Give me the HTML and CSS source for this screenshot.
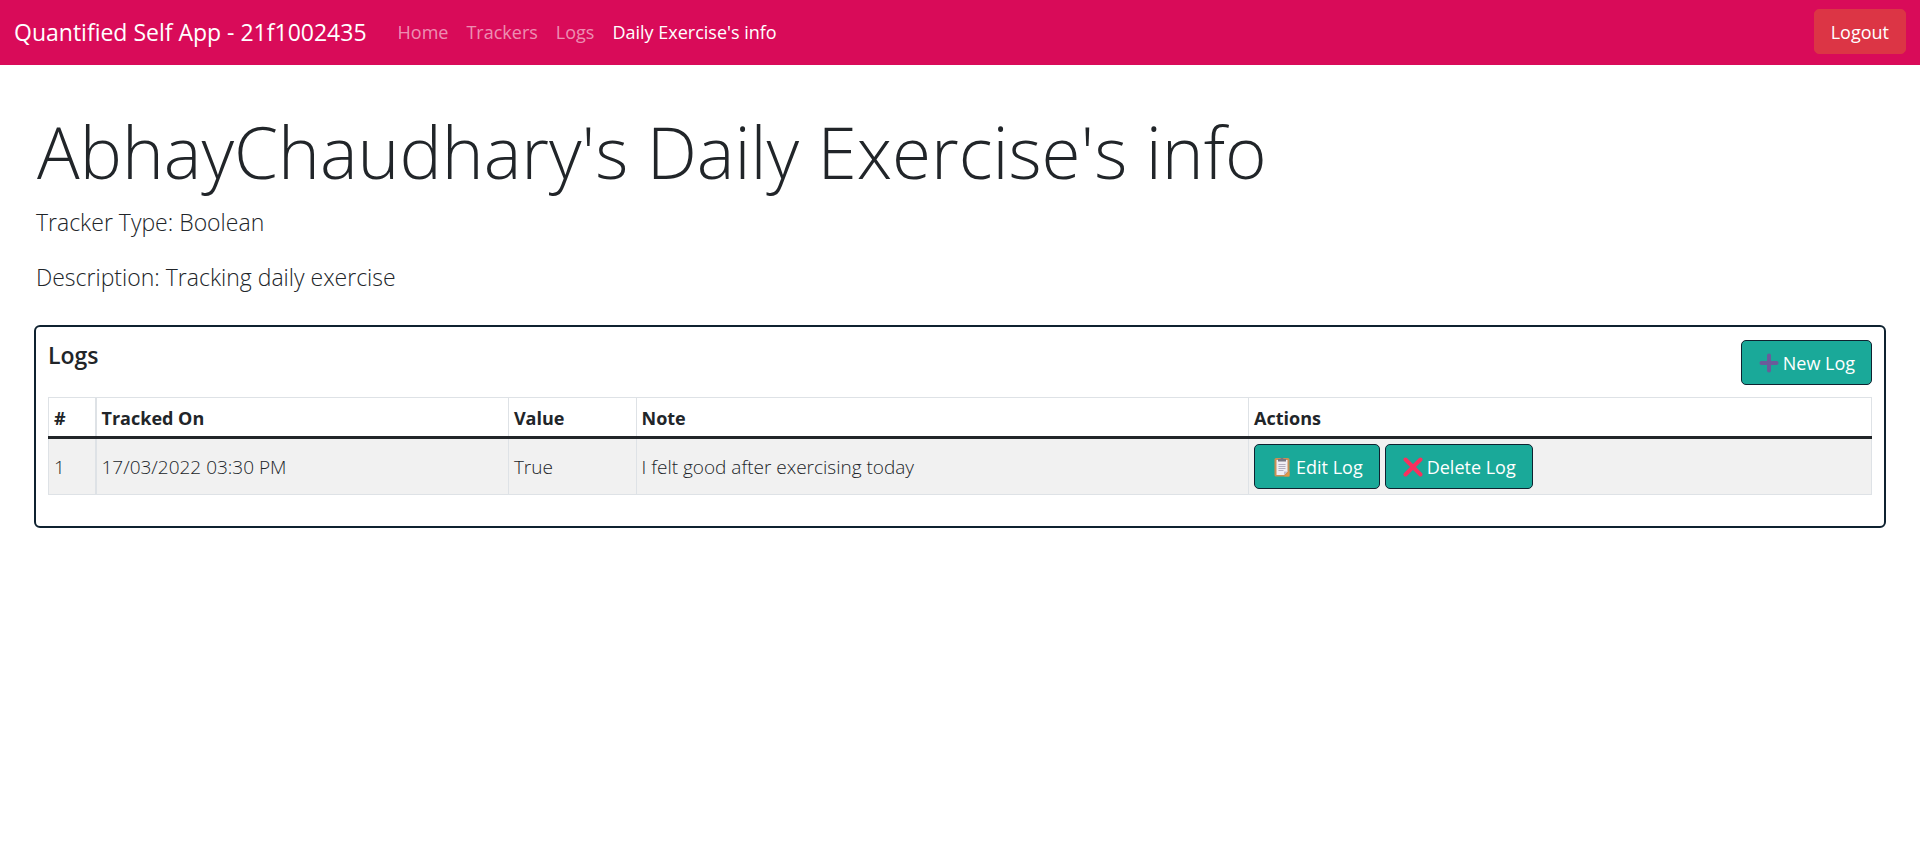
FILE: index.html
```html
<!DOCTYPE html>
<html lang="en">
<head>
<meta charset="utf-8">
<meta name="viewport" content="width=device-width, initial-scale=1">
<title>Daily Exercise's info</title>
<link rel="stylesheet" href="styles.css">
</head>
<body>
<nav class="navbar">
  <a class="brand" href="#">Quantified Self App - 21f1002435</a>
  <ul class="nav-list">
    <li><a class="nav-link" href="#">Home</a></li>
    <li><a class="nav-link" href="#">Trackers</a></li>
    <li><a class="nav-link" href="#">Logs</a></li>
    <li><a class="nav-link active" href="#" aria-current="page">Daily Exercise's info</a></li>
  </ul>
  <button class="btn btn-danger" type="button">Logout</button>
</nav>
<main class="page">
  <h1 class="title">AbhayChaudhary's Daily Exercise's info</h1>
  <p class="lead">Tracker Type: Boolean</p>
  <p class="lead">Description: Tracking daily exercise</p>
  <section class="card">
    <div class="card-head">
      <h2 class="card-title">Logs</h2>
      <button class="btn btn-teal" type="button">
        <svg class="icon" viewBox="0 0 20 20" aria-hidden="true"><path d="M10 2.500v15M2.500 10h15" fill="none" stroke="#6b5b9a" stroke-width="4" stroke-linecap="round"/></svg>New Log
      </button>
    </div>
    <table class="logs">
      <colgroup><col class="col-num"><col class="col-date"><col class="col-value"><col class="col-note"><col></colgroup>
      <thead>
        <tr><th scope="col">#</th><th scope="col">Tracked On</th><th scope="col">Value</th><th scope="col">Note</th><th scope="col">Actions</th></tr>
      </thead>
      <tbody>
        <tr>
          <td>1</td><td>17/03/2022 03:30 PM</td><td>True</td><td>I felt good after exercising today</td>
          <td>
            <div class="actions">
              <button class="btn btn-teal" type="button">
                <svg class="icon" viewBox="0 0 20 20" aria-hidden="true"><rect x="2.500" y="1" width="15" height="18.500" rx="1.500" fill="#c99056"/><path d="M4.500 3h11v11.500l-3.500 3.500H4.500z" fill="#f0eef5"/><path d="M12 18v-3.500h3.500z" fill="#c4bdcf"/><path d="M17.500 14v5.500H12z" fill="#e19747"/><path d="M6.500 7.500h7M6.500 9.500h7M6.500 11.500h7M6.500 13.500h5" stroke="#b3aebf" stroke-width="1"/><path d="M6 4.500V2h2.500a1.500 1.500 0 0 1 3 0H14v2.500z" fill="#777583"/></svg>Edit Log
              </button>
              <button class="btn btn-teal" type="button">
                <svg class="icon" viewBox="0 0 20 20" aria-hidden="true"><path d="M2.500 2.500l15 15M17.500 2.500l-15 15" fill="none" stroke="#f8315e" stroke-width="4" stroke-linecap="round"/></svg>Delete Log
              </button>
            </div>
          </td>
        </tr>
      </tbody>
    </table>
  </section>
</main>
</body>
</html>
```
FILE: styles.css
```css
* { box-sizing: border-box; }

body {
  margin: 0;
  background: #fff;
  color: #212529;
  font-family: "Open Sans", "Noto Sans", sans-serif;
  font-size: 18px;
  line-height: 28px;
}

.navbar {
  display: flex;
  align-items: center;
  padding: 9px 14px 11px;
  background: #d90b59;
}

.brand {
  margin-right: 22px;
  color: #fff;
  font-size: 23px;
  text-decoration: none;
}

.nav-list {
  display: flex;
  flex: 1;
  margin: 0;
  padding: 0;
  list-style: none;
}

.nav-link {
  display: block;
  padding: 0 9px;
  color: rgba(255, 255, 255, 0.55);
  text-decoration: none;
}

.nav-link.active { color: #fff; }

.btn {
  display: inline-flex;
  align-items: center;
  height: 45px;
  padding: 0 16px;
  border: 1px solid;
  border-radius: 5px;
  color: #fff;
  font: inherit;
  font-size: 18px;
  font-weight: 400;
  cursor: pointer;
}

.btn-danger {
  background: #dc3545;
  border-color: #dc3545;
}

.btn-teal {
  background: #1aa999;
  border-color: #0f2230;
}

.icon {
  width: 20px;
  height: 20px;
  margin: 0 4px 0 1px;
}

.page { padding: 41px 34px; }

.title {
  margin: 0 0 6px 3px;
  font-size: 71px;
  font-weight: 300;
  line-height: 92px;
}

.lead {
  margin: 0 2px 19px;
  font-size: 23px;
  font-weight: 300;
  line-height: 36px;
}

.card {
  margin-top: 30px;
  padding: 13px 12px 31px;
  border: 2px solid #0f2230;
  border-radius: 6px;
}

.card-head {
  display: flex;
  justify-content: space-between;
  align-items: flex-start;
  margin-bottom: 12px;
}

.card-title {
  margin: 0;
  font-size: 23px;
  font-weight: 600;
  line-height: 30px;
}

.logs {
  width: 100%;
  border-collapse: collapse;
  table-layout: fixed;
}

.col-num { width: 47px; }
.col-date { width: 22.65%; }
.col-value { width: 7%; }
.col-note { width: 33.6%; }

.logs th,
.logs td {
  padding: 5px;
  border: 1px solid #dee2e6;
  text-align: left;
}

.logs th:first-child,
.logs td:first-child { border-right-width: 2px; }

.logs th {
  padding: 6px 5px 4px;
  font-weight: 700;
}

.logs td {
  background: #f1f1f1;
  font-size: 19px;
  font-weight: 300;
}

.logs tbody td { border-top: 3px solid #212529; }

.actions {
  display: flex;
  gap: 5px;
}
```
